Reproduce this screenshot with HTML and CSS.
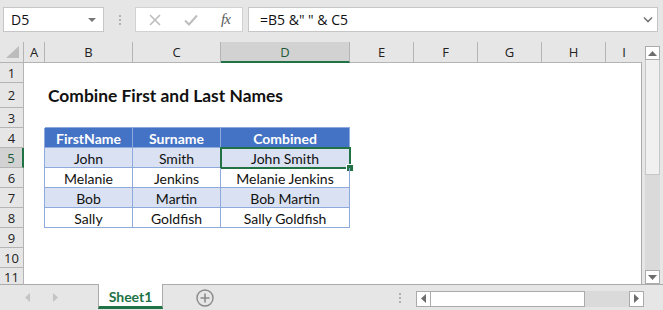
FILE: index.html
```html
<!DOCTYPE html>
<html>
<head>
<meta charset="utf-8">
<link rel="stylesheet" href="styles.css">
</head>
<body>
<div class="app">
  <div class="fbar">
    <div class="namebox"><span>D5</span><span class="dd"></span></div>
    <div class="vdots"><i></i><i></i><i></i></div>
    <div class="btnbox">
      <svg class="ic-x" width="12" height="12" viewBox="0 0 12 12"><path d="M1 1L11 11M11 1L1 11" stroke="#bdbdbd" stroke-width="1.6" fill="none"/></svg>
      <svg class="ic-ok" width="14" height="12" viewBox="0 0 14 12"><path d="M1 6.5L5 10.5L13 1.5" stroke="#bdbdbd" stroke-width="2" fill="none"/></svg>
      <span class="fx">fx</span>
    </div>
    <div class="finput"><span>=B5 &amp;" " &amp; C5</span>
      <svg class="chev" width="10" height="7" viewBox="0 0 10 7"><path d="M1 1.5L5 5.5L9 1.5" stroke="#777" stroke-width="1.6" fill="none"/></svg>
    </div>
  </div>

  <div class="sheet">
    <div class="gridwrap">
      <div class="colhead">
        <div class="ch corner"><svg width="16" height="14" viewBox="0 0 16 14"><path d="M15 1L15 13L2 13Z" fill="#bcbcbc"/></svg></div>
        <div class="ch ca">A</div>
        <div class="ch cb">B</div>
        <div class="ch cc">C</div>
        <div class="ch cd sel">D</div>
        <div class="ch ce">E</div>
        <div class="ch ce">F</div>
        <div class="ch ce">G</div>
        <div class="ch ce">H</div>
        <div class="ch ci">I</div>
      </div>
      <div class="body">
        <div class="row"><div class="rh">1</div></div>
        <div class="row r2"><div class="rh">2</div><div class="c ca"></div><div class="title">Combine First and Last Names</div></div>
        <div class="row"><div class="rh">3</div><div class="c ca"></div><div class="c cb ttop"></div><div class="c cc ttop"></div><div class="c cd ttop"></div></div>
        <div class="row"><div class="rh">4</div><div class="c ca tl"></div><div class="c cb t th">FirstName</div><div class="c cc t th">Surname</div><div class="c cd t th">Combined</div></div>
        <div class="row"><div class="rh rsel">5</div><div class="c ca tl"></div><div class="c cb t band">John</div><div class="c cc t band">Smith</div><div class="c cd t band active">John Smith<span class="handle"></span></div></div>
        <div class="row"><div class="rh">6</div><div class="c ca tl"></div><div class="c cb t">Melanie</div><div class="c cc t">Jenkins</div><div class="c cd t">Melanie Jenkins</div></div>
        <div class="row"><div class="rh">7</div><div class="c ca tl"></div><div class="c cb t band">Bob</div><div class="c cc t band">Martin</div><div class="c cd t band">Bob Martin</div></div>
        <div class="row"><div class="rh">8</div><div class="c ca tl"></div><div class="c cb t">Sally</div><div class="c cc t">Goldfish</div><div class="c cd t">Sally Goldfish</div></div>
        <div class="row"><div class="rh">9</div></div>
        <div class="row"><div class="rh">10</div></div>
        <div class="row r11"><div class="rh">11</div></div>
      </div>
    </div>
    <div class="vscroll">
      <div class="sbtn up"><svg width="9" height="5" viewBox="0 0 9 5"><path d="M0 5L4.5 0L9 5Z" fill="#6d6d6d"/></svg></div>
      <div class="vthumb"></div>
      <div class="vtrack"></div>
      <div class="sbtn down"><svg width="9" height="5" viewBox="0 0 9 5"><path d="M0 0L9 0L4.5 5Z" fill="#6d6d6d"/></svg></div>
    </div>
  </div>

  <div class="tabbar">
    <div class="navs">
      <svg width="5" height="9" viewBox="0 0 5 9"><path d="M5 0L0 4.5L5 9Z" fill="#c4c4c4"/></svg>
      <svg width="5" height="9" viewBox="0 0 5 9"><path d="M0 0L5 4.5L0 9Z" fill="#c4c4c4"/></svg>
    </div>
    <div class="tab">Sheet1</div>
    <div class="addbtn"><svg width="18" height="18" viewBox="0 0 18 18"><circle cx="9" cy="9" r="8" stroke="#8a8a8a" stroke-width="1.4" fill="none"/><path d="M9 4.5V13.5M4.5 9H13.5" stroke="#8a8a8a" stroke-width="1.6"/></svg></div>
    <div class="hdots"><i></i><i></i><i></i></div>
    <div class="hscroll">
      <div class="sbtn hl"><svg width="5" height="9" viewBox="0 0 5 9"><path d="M5 0L0 4.5L5 9Z" fill="#6d6d6d"/></svg></div>
      <div class="hthumb"></div>
      <div class="htrack"></div>
      <div class="sbtn hr"><svg width="5" height="9" viewBox="0 0 5 9"><path d="M0 0L5 4.5L0 9Z" fill="#6d6d6d"/></svg></div>
    </div>
  </div>
</div>
</body>
</html>
```

FILE: styles.css
```css
* { box-sizing: border-box; }
html, body { margin: 0; padding: 0; }
body {
  width: 663px;
  height: 310px;
  overflow: hidden;
  background: #e6e6e6;
  font-family: "Lato", "Liberation Sans", sans-serif;
  color: #111;
}
.app { width: 663px; height: 310px; display: flex; flex-direction: column; }

/* formula bar */
.fbar {
  height: 42px;
  display: flex;
  align-items: flex-start;
  padding: 7px 5px 0 3px;
}
.namebox {
  width: 101px; height: 25px;
  background: #fff;
  border: 1px solid #c6c6c6;
  display: flex; align-items: center; justify-content: space-between;
  padding: 0 7px 0 7px;
  font-family: "Open Sans", "Liberation Sans", sans-serif;
  font-size: 14px;
}
.dd { width: 0; height: 0; border-left: 4px solid transparent; border-right: 4px solid transparent; border-top: 4px solid #777; }
.vdots { width: 31px; height: 25px; display: flex; flex-direction: column; align-items: center; justify-content: center; gap: 2px; }
.vdots i, .hdots i { display: block; width: 2px; height: 2px; background: #b0b0b0; }
.btnbox {
  width: 108px; height: 25px;
  background: #fff;
  border: 1px solid #d2d2d2;
  display: flex; align-items: center;
  padding-left: 13px;
}
.ic-ok { margin-left: 23px; }
.fx { margin-left: 23px; font-family: "Liberation Serif", serif; font-style: italic; font-size: 15px; color: #5a5a5a; letter-spacing: -1px; }
.finput {
  flex: 1; margin-left: 5px; height: 25px;
  background: #fff;
  border: 1px solid #c6c6c6;
  display: flex; align-items: center; justify-content: space-between;
  padding: 0 4px 0 11px;
  font-family: "Open Sans", "Liberation Sans", sans-serif;
  font-size: 14px;
}

/* sheet */
.sheet { height: 242px; display: flex; }
.gridwrap { width: 642px; display: flex; flex-direction: column; }
.colhead { height: 21px; display: flex; }
.ch {
  height: 21px;
  border-right: 1px solid #b4b4b4;
  border-bottom: 1px solid #b4b4b4;
  display: flex; align-items: center; justify-content: center;
  font-family: "Open Sans", "Liberation Sans", sans-serif;
  font-size: 13px; color: #222;
}
.corner { width: 24px; justify-content: flex-end; align-items: flex-end; padding: 0 3px 3px 0; }
.ca { width: 21px; }
.cb { width: 88px; }
.cc { width: 88px; }
.cd { width: 129px; }
.ce { width: 64px; }
.ci { width: 36px; border-right: none; }
.ch.sel { background: #d2d2d2; border-bottom: 2px solid #217346; color: #1d5b38; }

.body { flex: 1; background: #fff; border-right: 1px solid #ababab; display: flex; flex-direction: column; }
.row { height: 20px; display: flex; }
.row.r2 { height: 25px; }
.row.r11 { height: 16px; }
.rh {
  width: 24px; flex: none;
  background: #e6e6e6;
  border-right: 1px solid #b4b4b4;
  border-bottom: 1px solid #b4b4b4;
  display: flex; align-items: center; justify-content: center;
  font-family: "Open Sans", "Liberation Sans", sans-serif;
  font-size: 13px; color: #222;
}
.r11 .rh { border-bottom: none; align-items: flex-start; }
.rh.rsel { background: #d2d2d2; border-right: 2px solid #217346; color: #1d5b38; }

.c { height: 100%; flex: none; display: flex; align-items: center; justify-content: center; font-size: 14px; position: relative; }
.c.tl { border-right: 1px solid #8ea9db; }
.c.ttop { border-bottom: 1px solid #8ea9db; }
.c.t { border-right: 1px solid #8ea9db; border-bottom: 1px solid #8ea9db; padding-top: 1px; }
.c.th { background: #4472c4; color: #fff; font-weight: bold; }
.c.band { background: #d9e1f2; }
.c.active { outline: 2px solid #217346; outline-offset: -1px; }
.handle { position: absolute; right: -4px; bottom: -4px; width: 6px; height: 6px; background: #217346; border: 1px solid #fff; box-sizing: content-box; margin: -1px; }

.title {
  padding-left: 3px;
  display: flex; align-items: flex-end; padding-bottom: 2px;
  font-weight: bold; font-size: 17.4px; white-space: nowrap;
}

.vscroll { width: 21px; display: flex; flex-direction: column; padding: 4px 3px 0 3px; }
.sbtn { background: #fff; border: 1px solid #ababab; display: flex; align-items: center; justify-content: center; flex: none; }
.sbtn.up { height: 14px; }
.sbtn.down { height: 14px; }
.vthumb { height: 115px; background: #f0f0f0; border: 1px solid #c6c6c6; border-top: none; }
.vtrack { flex: 1; background: #dadada; }

/* tab bar */
.tabbar { height: 26px; display: flex; border-top: 1px solid #ababab; align-items: stretch; }
.navs { width: 98px; display: flex; align-items: center; padding-left: 25px; gap: 23px; }
.tab {
  width: 65px; background: #fff;
  border-left: 1px solid #ababab; border-right: 1px solid #ababab;
  border-bottom: 3px solid #217346;
  margin-top: -1px; margin-bottom: 1px;
  display: flex; align-items: center; justify-content: center;
  font-weight: bold; font-size: 14px; color: #217346;
  padding-top: 2px;
}
.addbtn { margin-left: 33px; display: flex; align-items: center; }
.hdots { margin-left: 185px; width: 2px; display: flex; flex-direction: column; justify-content: center; gap: 2px; }
.hscroll { margin-left: 15px; width: 228px; height: 16px; align-self: center; margin-top: 2px; display: flex; }
.sbtn.hl, .sbtn.hr { width: 15px; }
.hthumb { width: 154px; background: #fff; border: 1px solid #ababab; border-left: none; }
.htrack { flex: 1; background: #dadada; }
```
